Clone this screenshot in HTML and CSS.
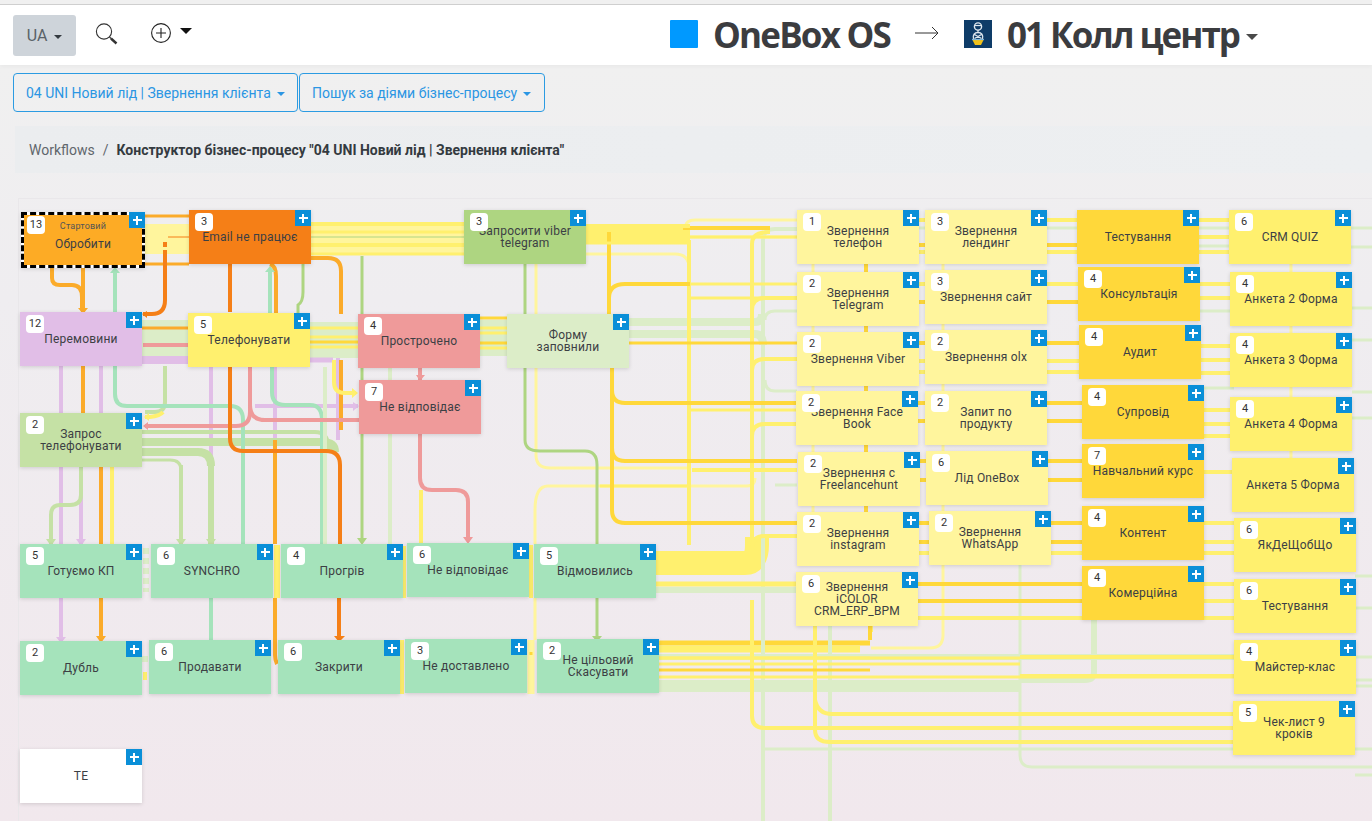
FILE: index.html
```html
<!DOCTYPE html>
<html lang="uk">
<head>
<meta charset="utf-8">
<title>Конструктор бізнес-процесу</title>
<link rel="stylesheet" href="styles.css">
</head>
<body>
<header class="topbar">
  <button class="lang">UA<i class="caret"></i></button>
  <svg class="search" width="24" height="24" viewBox="0 0 24 24"><circle cx="9" cy="8.5" r="7.6"/><path class="thin" d="M14.5 14 L16 15.5"/><path class="thick" d="M16 15.5 L21.5 20.5"/></svg>
  <div class="add">
    <svg width="22" height="22" viewBox="0 0 22 22"><circle cx="11" cy="11" r="9.4"/><path d="M11 6V16M6 11H16"/></svg>
    <i class="caret caret-big"></i>
  </div>
  <div class="brand">
    <span class="brand-square"></span>
    <span class="brand-name">OneBox OS</span>
    <svg class="brand-arrow" width="24" height="14" viewBox="0 0 24 14"><path d="M0 7H23M17 1L23 7L17 13"/></svg>
    <svg class="brand-logo" width="28" height="28" viewBox="0 0 28 28"><rect width="28" height="28" fill="#0e3c68"/><circle cx="14" cy="6.5" r="3.6" fill="none" stroke="#dfe8ef" stroke-width="1.4"/><path d="M11 5.5H17" stroke="#dfe8ef" stroke-width="1.2"/><path d="M14 10V13M9.5 19C8.5 15 10.5 12.5 14 12.5S19.5 15 18.5 19M10.5 14.5L17.5 18.5M17.5 14.5L10.5 18.5" fill="none" stroke="#dfe8ef" stroke-width="1.3"/><path d="M8.5 20H19.5L17 25H11Z" fill="#f2c21a"/><path d="M8 19.5H20" stroke="#7fb6d8" stroke-width="1.2"/></svg>
    <span class="brand-name brand-dept">01 Колл центр</span>
    <i class="caret caret-dark"></i>
  </div>
</header>

<nav class="toolbar">
  <button class="tool tool-a">04 UNI Новий лід | Звернення клієнта<i class="caret"></i></button>
  <button class="tool tool-b">Пошук за діями бізнес-процесу<i class="caret"></i></button>
</nav>

<div class="crumbs"><span class="crumb">Workflows</span><span class="sep">/</span><b>Конструктор бізнес-процесу "04 UNI Новий лід | Звернення клієнта"</b></div>

<main class="canvas">
  <svg class="edges" width="1372" height="623" viewBox="0 198 1372 623">
    <g class="pg w44"><path d="M142 342H188"/></g>
    <g class="pg w36"><path d="M310 340H358M480 338H507"/></g>
    <g class="pg w8"><path d="M629 322H755Q762 322 762 314M629 334H755Q763 334 763 345"/></g>
    <g class="pg w12"><path d="M659 686H1020"/></g>
    <g class="py w30"><path d="M145 239H190"/><path d="M311 239H464"/></g>
    <g class="yl w20"><path d="M586 234H690"/></g>
    <g class="yl w24"><path d="M656 563H745Q757 563 757 545V537"/></g>
    <g class="gd w5"><path d="M658 643H870"/></g>
    <g class="yl w7"><path d="M658 649H860"/></g>
    <g class="pg w6"><path d="M659 657H1240"/><path d="M656 590H800"/><path d="M1020 680H1085Q1094 680 1094 672V620"/></g>
    <g class="pg w4"><path d="M763 240V821M830 626V821M763 240Q763 229 775 229H797"/></g>
    <g class="pg w3"><path d="M775 311Q765 311 765 320M775 391Q765 391 765 380M775 485H797M775 311H797M775 391H797"/><path d="M1020 565V755Q1020 767 1032 767H1372"/><path d="M765 749H1372"/></g>
    <g class="pg dash w6"><path d="M146 548V592M145 656V662"/></g>

    <!-- yellow rails -->
    <g class="py w3">
      <path d="M686 226Q686 220 695 220H797"/>
      <path d="M690 237H797"/>
      <path d="M536 264V314M536 368V455Q536 468 550 468H690"/>
      <path d="M535 544V510Q535 486 548 486H747Q755 486 755 478"/>
      <path d="M535 598V640"/>
      <path d="M586 254H675Q689 254 689 268"/>
      <path d="M943 565V635Q943 648 930 648H871"/>
      <path d="M813 264V272M813 326V332M813 386V391M813 445V452M813 506V512M943 264V270M943 324V330M943 384V391M943 445V451M943 505V511M1291 264V272M1291 326V333M1291 387V397M1291 451V458"/>
    </g>
    <g class="py w7"><path d="M531 640V694"/></g>
    <g class="yl w4">
      <path d="M689 240V545"/>
      <path d="M752 600V716Q752 728 765 728H1233"/>
      <path d="M815 626V730Q815 742 830 742H1234"/>
      <path d="M815 700Q818 714 832 714H1234"/>
      <path d="M752 244Q752 232 770 232M752 244V540M752 310Q752 298 765 298H797M752 370Q752 359 765 359H797M752 436Q752 424 765 424H797M752 548Q752 536 765 536H797"/>
      <path d="M692 470H797"/>
      <path d="M871 625V632M1020 657H1234M1020 676H1234"/>
      <path d="M421 490V544M404 546V598M531 545V598M402 640V694M145 672V680"/>
    </g>
    <g class="yl w6"><path d="M277 545V598"/></g>
    <g class="yl w5"><path d="M656 584H797"/></g>
    <g class="yl w3"><path d="M610 237H797M690 410H797M600 486H690M656 658H1020M656 677H1240"/><path d="M659 664H1020"/></g>

    <!-- gaps between the right-hand columns -->
    <g class="yl w4"><path d="M915 220H1082M915 252H1082M915 284H1082M915 361H1082M915 372H1082M915 553H1082M915 618H1082"/></g>
    <g class="yl w4"><path d="M1195 220H1234M1195 237H1234M1195 252H1234M1195 284H1234M1195 298H1234M1195 346H1234M1195 360H1234M1195 373H1234M1195 410H1234M1195 424H1234M1195 436H1234M1195 472H1234M1195 523H1240M1195 542H1240M1195 553H1240M1195 584H1240M1195 601H1240M1195 618H1240"/></g>
    <g class="pg w3"><path d="M915 228H1082M1195 228H1234M1195 246H1234M1195 311H1234M1195 388H1234"/><path d="M1351 228H1372M1351 247H1372M1352 308H1372M1352 340H1372M1352 392H1372M1352 418H1372M1355 576H1372M1355 608H1372M1356 657H1372M1356 686H1372M1356 680H1372M1355 775H1372"/></g>
    <g class="gd w4"><path d="M915 245H1082M915 302H1082M915 343H1082M915 403H1082M915 421H1082M915 461H1082M915 480H1082M915 523H1082M915 542H1082M915 584H1082M915 601H1082"/></g>

    <!-- gold rails -->
    <g class="gd w4">
      <path d="M609 232V314"/>
      <path d="M609 314V298Q609 284 625 284H690"/>
      <path d="M612 368V390Q612 403 625 403H797M612 390V448Q612 461 625 461H797M612 448V510Q612 523 625 523H797"/>
      <path d="M683 228H770"/>
      <path d="M870 626V640"/>
      <path d="M866 264V272M866 326V332M866 386V391M866 445V452M866 506V512"/>
    </g>
    <g class="gd w3"><path d="M629 343H797M480 318H507M480 343H507M310 342H358M658 670H870"/><path d="M531 652V655"/></g>
    <g class="yl w3"><path d="M690 284H797M690 298H797M480 328H507M480 333H507M480 348H507M310 328H358M310 337H358M310 347H358M658 658H870"/></g>

    <!-- top-left band lines -->
    <g class="yl w4"><path d="M311 224H464M311 245H464M586 226H690"/></g>
    <g class="yl w3"><path d="M311 232H464M311 254H464M586 243H690"/></g>
    <g class="gr w1"><path d="M311 237H464"/></g>
    <g class="am w3"><path d="M145 216H189M145 264H189"/><path d="M142 328H188"/></g>
    <g class="or w1"><path d="M168 237H189"/></g>
    <g class="or w4"><path d="M165 242V247"/><path d="M165 250V300Q165 314 152 314H143"/></g>

    <!-- lilac -->
    <g class="li w8"><path d="M142 360H188"/></g>
    <g class="li w5"><path d="M310 360H333"/></g>
    <g class="li w4">
      <path d="M61 366V641M101 366V413M81 467V544M211 367V460M275 367V440M338 358V440"/>
      <path d="M255 406H358"/>
    </g>
    <!-- light green -->
    <g class="lg w4">
      <path d="M81 467V495Q81 505 70 505H60Q51 505 51 515V544"/>
      <path d="M142 432H315Q328 432 328 447V450"/>
      <path d="M165 366V402Q165 412 155 412H145"/>
      <path d="M181 465V544"/>
    </g>
    <g class="lg w8"><path d="M142 442H322Q335 442 335 452"/></g>
    <g class="lg w8"><path d="M142 452H198Q211 452 211 466"/></g>
    <g class="lg w6"><path d="M211 462V544"/></g>
    <g class="lg w3"><path d="M142 460H170Q181 460 181 470"/></g>
    <!-- mint -->
    <g class="mn w4">
      <path d="M115 272V312M115 366V394Q115 406 127 406H230Q243 406 243 420V544"/>
      <path d="M270 272V313M272 367V392Q272 405 285 405H310Q322 405 322 420V544"/>
      <path d="M211 598V640"/>
    </g>
    <!-- pale green verticals -->
    <g class="pg w4"><path d="M325 367V544M390 368V380M390 434V544"/></g>
    <!-- amber -->
    <g class="am w4">
      <path d="M52 268V278Q52 285 60 285H72Q82 285 82 297V310"/>
      <path d="M83 268V312M83 366V413M101 467V544M101 598V638"/>
      <path d="M270 264Q276 266 276 276V313M275 440V544M275 598V655Q275 660 277 664"/>
      <path d="M311 258H328Q341 258 341 271V314M341 360V430"/>
    </g>
    <!-- greens -->
    <g class="gr w3">
      <path d="M303 264V292Q303 302 298 305V313"/>
      <path d="M362 256V314M362 368V380M362 434V542"/>
      <path d="M525 264V314M525 368V440Q525 451 540 451H585Q597 451 597 465V544M597 598V638"/>
    </g>
    <!-- yellow left -->
    <g class="yl w4"><path d="M112 467V544M334 360V382Q334 393 345 393H356M163 412Q160 416 150 417H145"/></g>
    <!-- salmon -->
    <g class="sa w4">
      <path d="M143 345H188"/>
      <path d="M250 367V412Q250 426 236 426H145"/>
      <path d="M250 405Q250 420 265 420H359"/>
      <path d="M420 368V380"/>
      <path d="M420 434V478Q420 490 432 490H456Q468 490 468 502V541"/>
    </g>
    <!-- orange -->
    <g class="or w4">
      <path d="M230 264V312M230 367V438Q230 451 243 451H326Q340 451 340 465V544M339 598V638"/>
    </g>
    <!-- arrow heads -->
    <path class="am-f" d="M78 308H88L83 314ZM96 636H106L101 643Z"/>
    <path class="or-f" d="M334 636H345L339 642ZM147 311V318L142 314Z"/>
    <path class="li-f" d="M56 637H66L61 643ZM76 539H86L81 546ZM353 402V411L359 406Z"/>
    <path class="lg-f" d="M46 539H56L51 546ZM176 539H186L181 546ZM206 539H216L211 546Z"/>
    <path class="mn-f" d="M110 273H120L115 267ZM265 272H275L270 266Z"/>
    <path class="gr-f" d="M357 538H367L362 545ZM592 636H602L597 642Z"/>
    <path class="sa-f" d="M463 537H473L468 544ZM416 375H425L420 381ZM148 422V430L143 426Z"/>
    <path class="yl-f" d="M352 388V398L358 393ZM149 413V421L144 417Z"/>
  </svg>

  <div class="node amber start n01"><span class="tag">Стартовий</span><span class="title">Обробити</span><i class="badge">13</i><i class="plus"></i></div>
  <div class="node orange n02">Email не працює<i class="badge">3</i><i class="plus"></i></div>
  <div class="node green n03">Запросити viber<br>telegram<i class="badge">3</i><i class="plus"></i></div>
  <div class="node lilac n04">Перемовини<i class="badge">12</i><i class="plus"></i></div>
  <div class="node yellow n05">Телефонувати<i class="badge">5</i><i class="plus"></i></div>
  <div class="node salmon n06">Прострочено<i class="badge">4</i><i class="plus"></i></div>
  <div class="node salmon n07">Не відповідає<i class="badge">7</i><i class="plus"></i></div>
  <div class="node lightgreen n08">Запрос<br>телефонувати<i class="badge">2</i><i class="plus"></i></div>
  <div class="node palegreen n09">Форму<br>заповнили<i class="plus"></i></div>

  <div class="node mint n10">Готуємо КП<i class="badge">5</i><i class="plus"></i></div>
  <div class="node mint n11">SYNCHRO<i class="badge">6</i><i class="plus"></i></div>
  <div class="node mint n12">Прогрів<i class="badge">4</i><i class="plus"></i></div>
  <div class="node mint n13">Не відповідає<i class="badge">6</i><i class="plus"></i></div>
  <div class="node mint n14">Відмовились<i class="badge">5</i><i class="plus"></i></div>
  <div class="node mint n15">Дубль<i class="badge">2</i><i class="plus"></i></div>
  <div class="node mint n16">Продавати<i class="badge">6</i><i class="plus"></i></div>
  <div class="node mint n17">Закрити<i class="badge">6</i><i class="plus"></i></div>
  <div class="node mint n18">Не доставлено<i class="badge">3</i><i class="plus"></i></div>
  <div class="node mint n19">Не цільовий<br>Скасувати<i class="badge">2</i><i class="plus"></i></div>
  <div class="node white n20">ТЕ<i class="plus"></i></div>

  <div class="node pale n21">Звернення<br>телефон<i class="badge">1</i><i class="plus"></i></div>
  <div class="node pale n22">Звернення<br>Telegram<i class="badge">2</i><i class="plus"></i></div>
  <div class="node pale n23">Звернення Viber<i class="badge">2</i><i class="plus"></i></div>
  <div class="node pale n24">Звернення Face<br>Book<i class="badge">2</i><i class="plus"></i></div>
  <div class="node pale n25">Звернення с<br>Freelancehunt<i class="badge">2</i><i class="plus"></i></div>
  <div class="node pale n26">Звернення<br>instagram<i class="badge">2</i><i class="plus"></i></div>
  <div class="node pale n27">Звернення<br>iCOLOR<br>CRM_ERP_BPM<i class="badge">6</i><i class="plus"></i></div>

  <div class="node pale n28">Звернення<br>лендинг<i class="badge">3</i><i class="plus"></i></div>
  <div class="node pale n29">Звернення сайт<i class="badge">3</i><i class="plus"></i></div>
  <div class="node pale n30">Звернення olx<i class="badge">2</i><i class="plus"></i></div>
  <div class="node pale n31">Запит по<br>продукту<i class="badge">2</i><i class="plus"></i></div>
  <div class="node pale n32">Лід OneBox<i class="badge">6</i><i class="plus"></i></div>
  <div class="node pale n33">Звернення<br>WhatsApp<i class="badge">2</i><i class="plus"></i></div>

  <div class="node gold n34">Тестування<i class="plus"></i></div>
  <div class="node gold n35">Консультація<i class="badge">4</i><i class="plus"></i></div>
  <div class="node gold n36">Аудит<i class="badge">4</i><i class="plus"></i></div>
  <div class="node gold n37">Супровід<i class="badge">4</i><i class="plus"></i></div>
  <div class="node gold n38">Навчальний курс<i class="badge">7</i><i class="plus"></i></div>
  <div class="node gold n39">Контент<i class="badge">4</i><i class="plus"></i></div>
  <div class="node gold n40">Комерційна<i class="badge">4</i><i class="plus"></i></div>

  <div class="node yellow n41">CRM QUIZ<i class="badge">6</i><i class="plus"></i></div>
  <div class="node yellow n42">Анкета 2 Форма<i class="badge">4</i><i class="plus"></i></div>
  <div class="node yellow n43">Анкета 3 Форма<i class="badge">4</i><i class="plus"></i></div>
  <div class="node yellow n44">Анкета 4 Форма<i class="badge">4</i><i class="plus"></i></div>
  <div class="node yellow n45">Анкета 5 Форма<i class="plus"></i></div>
  <div class="node yellow n46">ЯкДеЩобЩо<i class="badge">6</i><i class="plus"></i></div>
  <div class="node yellow n47">Тестування<i class="badge">6</i><i class="plus"></i></div>
  <div class="node yellow n48">Майстер-клас<i class="badge">4</i><i class="plus"></i></div>
  <div class="node yellow n49">Чек-лист 9<br>кроків<i class="badge">5</i><i class="plus"></i></div>
</main>
</body>
</html>
```
FILE: styles.css
```css
* { box-sizing: border-box; }
html, body { margin: 0; height: 821px; overflow: hidden; }
body {
  font-family: Roboto, "Liberation Sans", sans-serif;
  background: linear-gradient(180deg, #f0f0f0 65px, #efedf0 300px, #f1e8ed 100%);
  background-color: #fff;
  color: #37474f;
  padding-top: 4px;
}
button { font: inherit; cursor: pointer; }

.caret {
  display: inline-block;
  width: 0;
  height: 0;
  margin-left: 6px;
  vertical-align: 2px;
  border-top: 4px solid currentColor;
  border-left: 4px solid transparent;
  border-right: 4px solid transparent;
}

/* top bar */
.topbar {
  display: flex;
  align-items: center;
  height: 61px;
  padding: 0 114px 0 13px;
  background: #fff;
  border-top: 1px solid #cfcfcf;
  box-shadow: 0 2px 4px rgba(0, 0, 0, .03);
}
.lang {
  width: 63px;
  height: 41px;
  border: 0;
  border-radius: 3px;
  background: #ced4da;
  color: #5a6268;
  font-size: 16px;
}
.lang .caret { margin-left: 7px; border-top-color: #343a40; }
.search { margin-left: 19px; fill: none; stroke: #333; }
.search circle, .search .thin { stroke-width: 1.1; }
.search .thick { stroke-width: 2.4; }
.add { display: flex; align-items: center; margin-left: 31px; margin-top: -4px; }
.add svg { fill: none; stroke: #222; stroke-width: 1.1; }
.caret-big { margin-left: 8px; margin-top: -4px; color: #111; border-top-width: 6px; border-left-width: 6px; border-right-width: 6px; vertical-align: 0; }

.brand { display: flex; align-items: center; margin-left: auto; }
.brand-square { width: 28px; height: 28px; margin-top: -2px; border-radius: 1px; background: #0099ff; }
.brand-name {
  margin-left: 15px;
  font-family: "Open Sans", sans-serif;
  font-size: 35px;
  font-weight: 700;
  letter-spacing: -1.8px;
  line-height: 40px;
  margin-top: -1px;
  color: #3b3c3f;
  white-space: nowrap;
}
.brand-arrow { margin-left: 25px; margin-top: -4px; fill: none; stroke: #333; stroke-width: 1; }
.brand-logo { margin-left: 25px; margin-top: -2px; }
.brand-dept { margin-left: 15px; letter-spacing: -2px; }
.caret-dark { margin-left: 7px; margin-top: 4px; color: #4a4a4a; border-top-width: 6px; border-left-width: 6px; border-right-width: 6px; }

/* toolbar */
.toolbar { display: flex; gap: 1px; padding: 8px 0 0 13px; }
.tool {
  height: 39px;
  padding: 0 12px;
  text-align: left;
  white-space: nowrap;
  border: 1px solid #2b9be2;
  border-radius: 4px;
  background: transparent;
  color: #2b96e3;
  font-size: 14px;
}
.tool-a { width: 285px; }
.tool-b { width: 246px; }

/* breadcrumb */
.crumbs {
  display: flex;
  align-items: center;
  height: 47px;
  margin: 14px 0 0 15px;
  padding-left: 14px;
  font-size: 14px;
  background: linear-gradient(90deg, #ebedef, #edeff1);
  color: #5f666c;
  white-space: nowrap;
}
.sep { margin: 0 8px; }
.crumbs b { color: #343a40; font-weight: 700; }

/* canvas */
.canvas {
  position: relative;
  height: 623px;
  margin-top: 25px;
  overflow: hidden;
}
.canvas::before {
  content: "";
  position: absolute;
  left: 18px;
  top: 0;
  right: 0;
  bottom: 0;
  border-left: 1px solid #e9e7ea;
  border-top: 1px solid #e9e7ea;
}
.edges { position: absolute; left: 0; top: 0; fill: none; }

.w1 { stroke-width: 1; }
.w3 { stroke-width: 3; }
.w4 { stroke-width: 4; }
.w5 { stroke-width: 5; }
.w6 { stroke-width: 6; }
.w7 { stroke-width: 7; }
.w8 { stroke-width: 8; }
.w12 { stroke-width: 12; }
.w20 { stroke-width: 20; }
.w24 { stroke-width: 24; }
.w30 { stroke-width: 30; }
.w36 { stroke-width: 36; }
.w44 { stroke-width: 44; }
.dash { stroke-dasharray: 6 4; }
.pg { stroke: #dcedc8; }
.py { stroke: #fff59d; }
.yl { stroke: #fff06e; }
.gd { stroke: #ffd83a; }
.am { stroke: #fbab2a; }
.or { stroke: #f57f17; }
.li { stroke: #e1bee7; }
.lg { stroke: #c5e1a5; }
.mn { stroke: #a5e3bb; }
.gr { stroke: #aed581; }
.sa { stroke: #ef9a9a; }
.am-f { fill: #fbab2a; }
.or-f { fill: #f57f17; }
.li-f { fill: #e1bee7; }
.lg-f { fill: #c5e1a5; }
.mn-f { fill: #a5e3bb; }
.gr-f { fill: #aed581; }
.sa-f { fill: #ef9a9a; }
.yl-f { fill: #fff06e; }

/* nodes */
.node {
  position: absolute;
  width: 122px;
  height: 54px;
  padding-top: 21px;
  text-align: center;
  font-size: 12px;
  line-height: 12px;
  letter-spacing: .2px;
  color: #3c4044;
  white-space: nowrap;
  box-shadow: 0 1px 4px rgba(0, 0, 0, .14);
}
.node:has(br) { padding-top: 15px; }
.node.n27 { padding-top: 9px; }
.badge {
  position: absolute;
  left: 6px;
  top: 3px;
  width: 18px;
  height: 18px;
  border-radius: 4px;
  background: #fff;
  color: #333;
  font-style: normal;
  font-size: 11px;
  line-height: 18px;
  letter-spacing: 0;
}
.plus {
  position: absolute;
  right: 0;
  top: 0;
  width: 16px;
  height: 16px;
  background:
    linear-gradient(#fff, #fff) center / 9px 2px no-repeat,
    linear-gradient(#fff, #fff) center / 2px 9px no-repeat,
    #0a8fd8;
}

.amber { background: #fdab25; }
.orange { background: #f57f17; }
.green { background: #aed581; }
.lilac { background: #e1bee7; }
.yellow { background: #fff06e; }
.salmon { background: #ef9a9a; }
.lightgreen { background: #c5e1a5; }
.palegreen { background: #dcedc8; }
.mint { background: #a5e3bb; }
.white { background: #fff; }
.pale { background: #fff59d; }
.gold { background: #ffd83a; }

.start {
  width: 124px;
  height: 56px;
  padding-top: 6px;
  border: 3px dashed #000;
  background: linear-gradient(#fdab25, #fdab25) padding-box, #fff border-box;
}
.start .tag { display: block; font-size: 9px; line-height: 11px; color: #555; margin-bottom: 6px; }
.start .title { display: block; }
.start .badge { left: 3px; top: 1px; }
.start .plus { right: -3px; top: -3px; }

.n01 { left: 21px; top: 14px; }
.n02 { left: 189px; top: 12px; }
.n03 { left: 464px; top: 12px; }
.n04 { left: 20px; top: 114px; }
.n05 { left: 188px; top: 115px; }
.n06 { left: 358px; top: 116px; }
.n07 { left: 359px; top: 182px; }
.n08 { left: 20px; top: 215px; }
.n09 { left: 507px; top: 116px; }
.n10 { left: 20px; top: 346px; }
.n11 { left: 151px; top: 346px; }
.n12 { left: 281px; top: 346px; }
.n13 { left: 407px; top: 345px; }
.n14 { left: 534px; top: 346px; }
.n15 { left: 20px; top: 443px; }
.n16 { left: 149px; top: 442px; }
.n17 { left: 278px; top: 442px; }
.n18 { left: 405px; top: 441px; }
.n19 { left: 537px; top: 441px; }
.n20 { left: 20px; top: 551px; }
.n21 { left: 797px; top: 12px; }
.n22 { left: 797px; top: 74px; }
.n23 { left: 797px; top: 134px; }
.n24 { left: 796px; top: 193px; }
.n25 { left: 798px; top: 254px; }
.n26 { left: 797px; top: 314px; }
.n27 { left: 796px; top: 374px; }
.n28 { left: 925px; top: 12px; }
.n29 { left: 925px; top: 72px; }
.n30 { left: 925px; top: 132px; }
.n31 { left: 925px; top: 193px; }
.n32 { left: 926px; top: 253px; }
.n33 { left: 929px; top: 313px; }
.n34 { left: 1077px; top: 12px; }
.n35 { left: 1078px; top: 69px; }
.n36 { left: 1079px; top: 127px; }
.n37 { left: 1082px; top: 187px; }
.n38 { left: 1082px; top: 246px; }
.n39 { left: 1082px; top: 308px; }
.n40 { left: 1082px; top: 368px; }
.n41 { left: 1229px; top: 12px; }
.n42 { left: 1230px; top: 74px; }
.n43 { left: 1230px; top: 135px; }
.n44 { left: 1230px; top: 199px; }
.n45 { left: 1232px; top: 260px; }
.n46 { left: 1234px; top: 320px; }
.n47 { left: 1234px; top: 381px; }
.n48 { left: 1234px; top: 442px; }
.n49 { left: 1233px; top: 503px; }
```
